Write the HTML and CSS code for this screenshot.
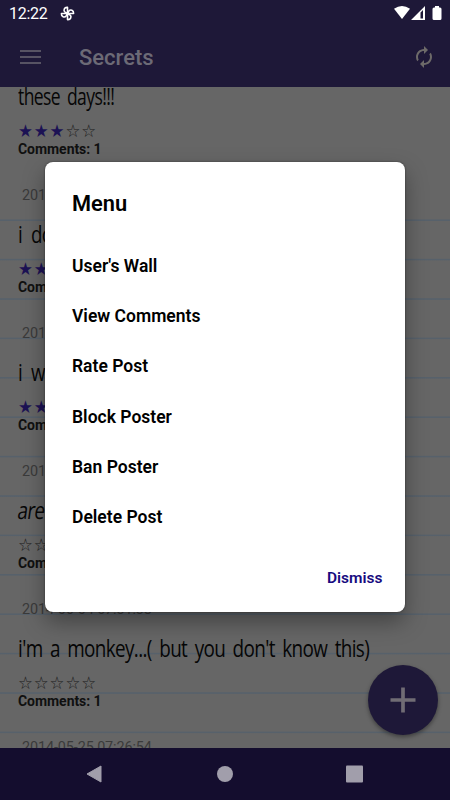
FILE: index.html
```html
<!DOCTYPE html>
<html lang="en">
<head>
<meta charset="utf-8">
<title>Secrets</title>
<link rel="stylesheet" href="styles.css">
</head>
<body>
<div class="screen">
  <header class="top">
    <div class="status">
      <span class="clock">12:22</span>
      <svg class="fan" viewBox="0 0 16 16"><g fill="none" stroke="#fff" stroke-width="1.7" stroke-linejoin="round"><path id="blade" d="M8 8V1.500C4.300 1.200 3.300 4.900 5.400 6.500Q6.600 7.300 8 8"/><use href="#blade" transform="rotate(90 8 8)"/><use href="#blade" transform="rotate(180 8 8)"/><use href="#blade" transform="rotate(270 8 8)"/></g></svg>
      <svg class="signals" viewBox="0 0 50 16"><path fill="#fff" d="M1 3.800Q9 -1.800 17 3.800L9 14Z"/><path fill="#fff" fill-rule="evenodd" d="M18 15 32 1V15ZM27.500 13.400H30V5L27.500 7.500Z"/><path fill="#fff" d="M42 1h4v1.500h1q1.500 0 1.500 1.500v9.500q0 1.500-1.500 1.500h-6q-1.500 0-1.500-1.500V4q0-1.500 1.500-1.500h1Z"/></svg>
    </div>
    <div class="bar">
      <svg class="burger" viewBox="0 0 22 16"><path d="M0 2h21M0 8h21M0 14h21" stroke="#575363" stroke-width="2"/></svg>
      <h1>Secrets</h1>
      <svg class="refresh" viewBox="2 0 20 24"><path fill="#6d6a69" d="M12 6v3l4-4-4-4v3c-4.420 0-8 3.580-8 8 0 1.570.46 3.030 1.240 4.260L6.700 14.800c-.45-.83-.7-1.790-.7-2.800 0-3.310 2.690-6 6-6zm6.760 1.740L17.300 9.200c.44.84.7 1.790.7 2.800 0 3.310-2.690 6-6 6v-3l-4 4 4 4v-3c4.420 0 8-3.580 8-8 0-1.570-.46-3.030-1.240-4.260z"/></svg>
    </div>
  </header>
  <main class="paper">
    <div class="posts">
      <article class="post"><time></time><p class="days">these days!!!</p><div class="stars"><b>★★★</b>☆☆</div><div class="comments">Comments: 1</div></article>
      <article class="post"><time>2014-06-06 07:31:50</time><p class="open">i do</p><div class="stars"><b>★★</b></div><div class="comments">Comments: 1</div></article>
      <article class="post"><time>2014-06-05 07:31:50</time><p class="open">i w</p><div class="stars"><b>★★</b></div><div class="comments">Comments: 1</div></article>
      <article class="post"><time>2014-06-05 07:31:50</time><p class="are">are</p><div class="stars">☆☆</div><div class="comments">Comments: 1</div></article>
      <article class="post"><time>2014-06-04 07:31:38</time><p class="monkey">i'm a monkey...( but you don't know this)</p><div class="stars">☆☆☆☆☆</div><div class="comments">Comments: 1</div></article>
      <article class="post"><time>2014-05-25 07:26:54</time></article>
    </div>
  </main>
  <nav class="nav">
    <svg viewBox="0 0 20 20"><path d="M1 10 15 2v16Z" fill="#a19eab" stroke="#a19eab" stroke-linejoin="round"/></svg>
    <svg viewBox="0 0 20 20"><circle cx="10" cy="10" r="8" fill="#a19eab"/></svg>
    <svg viewBox="0 0 20 20"><rect x="2" y="1.500" width="17" height="17" rx="1" fill="#a19eab"/></svg>
  </nav>
  <div class="fab"><svg viewBox="0 0 26 26"><path d="M13 .5v25M.5 13h25" stroke="#706c74" stroke-width="3.700"/></svg></div>
  <section class="dialog">
    <h2>Menu</h2>
    <ul>
      <li>User's Wall</li>
      <li>View Comments</li>
      <li>Rate Post</li>
      <li>Block Poster</li>
      <li>Ban Poster</li>
      <li>Delete Post</li>
    </ul>
    <div class="dismiss">Dismiss</div>
  </section>
</div>
</body>
</html>
```
FILE: styles.css
```css
* { box-sizing: border-box; }
body { margin: 0; }
h1, h2, p, ul { margin: 0; padding: 0; }
.screen {
  position: relative;
  width: 450px;
  height: 800px;
  overflow: hidden;
  display: flex;
  flex-direction: column;
  font-family: Roboto, sans-serif;
  background: #666;
}
.top { height: 87px; flex: none; background: #1e1838; }
.status { height: 28px; display: flex; align-items: center; padding: 0 7px 0 9px; }
.clock { color: #fff; font-size: 16px; line-height: 28px; width: 51px; letter-spacing: -0.3px; }
.fan { width: 15px; height: 15px; margin-top: -2px; }
.signals { width: 50px; height: 16px; margin-left: auto; margin-top: -2px; }
.bar { height: 59px; display: flex; align-items: center; padding: 0 16px 0 20px; }
.burger { width: 22px; height: 16px; margin-top: -2px; }
.bar h1 { margin-left: 37px; font-size: 22px; font-weight: 500; color: #6c6a76; line-height: 30px; padding-top: 1px; }
.refresh { width: 20px; height: 24px; margin-left: auto; margin-top: -2px; }
.paper {
  height: 661px;
  flex: none;
  overflow: hidden;
  background: repeating-linear-gradient(to bottom, transparent 0, transparent 36.900px, #57616b 37.900px, #57616b 38.600px, transparent 39.400px) 0 95px / 100% 600px no-repeat #666;
}
.posts { margin-top: -41px; }
.post { height: 138px; padding-left: 18px; }
.post time { display: block; height: 24px; line-height: 24px; padding-left: 4px; font-size: 14.400px; color: #3a3a3a; letter-spacing: -0.1px; }
.post p {
  height: 52px;
  line-height: 52px;
  width: max-content;
  color: #060606;
  font-family: "Open Sans", sans-serif;
  font-weight: 400;
  font-size: 24px;
  letter-spacing: -0.8px;
  white-space: nowrap;
  transform-origin: left center;
}
.post .days { transform: scaleX(0.73); word-spacing: 4px; }
.post .open { transform: scaleX(0.78); word-spacing: 6px; }
.post .are { transform: skewX(-8deg) scaleX(0.78); }
.post .monkey { transform: scaleX(0.787); word-spacing: 4px; }
.stars { height: 18px; line-height: 18px; font-family: "DejaVu Sans", sans-serif; font-size: 17.500px; letter-spacing: 0.95px; color: #1a1a1a; transform: scaleX(0.95); transform-origin: left center; }
.stars b { color: #1c1254; font-weight: 400; }
.comments { height: 18px; line-height: 18px; font-size: 14px; font-weight: 700; color: #101010; letter-spacing: -0.05px; }
.nav {
  height: 52px;
  flex: none;
  display: flex;
  align-items: center;
  justify-content: space-between;
  padding: 0 86px;
  background: #140d2e;
}
.nav svg { width: 20px; height: 20px; }
.fab {
  position: absolute;
  left: 368px;
  top: 665px;
  width: 70px;
  height: 70px;
  border-radius: 50%;
  background: #1e1838;
  box-shadow: 0 2px 4px rgba(0, 0, 0, 0.4);
  display: flex;
  align-items: center;
  justify-content: center;
}
.fab svg { width: 26px; height: 26px; }
.dialog {
  position: absolute;
  left: 45px;
  top: 161.500px;
  width: 359.500px;
  height: 450.500px;
  padding: 27px 22px 0 27px;
  border-radius: 8px;
  background: #fff;
  box-shadow: 0 10px 22px rgba(0, 0, 0, 0.35), 0 0 2px rgba(0, 0, 0, 0.5);
  color: #000;
}
.dialog h2 { font-size: 21.800px; line-height: 30px; font-weight: 600; }
.dialog ul { list-style: none; margin-top: 22px; }
.dialog li { height: 50.400px; line-height: 50.400px; font-size: 17.500px; font-weight: 600; }
.dismiss { margin-top: 24px; text-align: right; font-size: 15.500px; line-height: 22px; font-weight: 600; color: #170b80; }
```
